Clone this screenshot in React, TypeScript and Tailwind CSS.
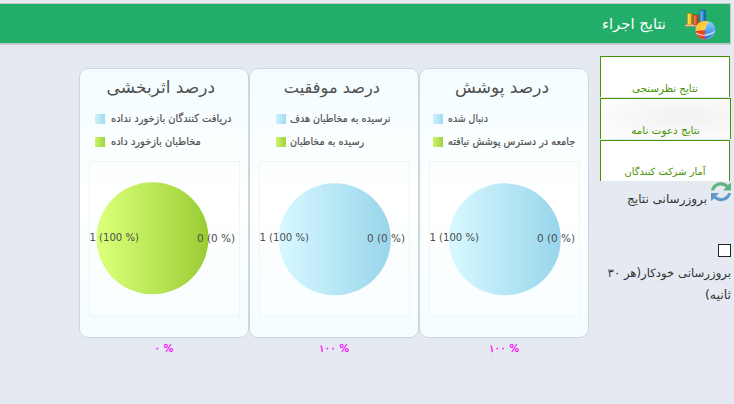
type Legend = { text: string; scale: string };

type Chart = {
  id: string;
  title: string;
  titleClass: string;
  legend: [Legend, Legend];
  legendClass: string;
  colors: [string, string];
  cx: number;
  cy: number;
  result: string;
};

const blue: [string, string] = ["#d5f7ff", "#98d5eb"];
const green: [string, string] = ["#d9ff78", "#99cc33"];

const charts: Chart[] = [
  {
    id: "coverage",
    title: "درصد پوشش",
    titleClass: "mr-[39px] pt-[5px] text-[17px]",
    legend: [
      { text: "دنبال شده", scale: "scale-x-[.85]" },
      { text: "جامعه در دسترس پوشش نیافته", scale: "scale-x-[.88]" },
    ],
    legendClass: "pl-[13px] gap-[5px]",
    colors: blue,
    cx: 75.8,
    cy: 78.3,
    result: "۱۰۰",
  },
  {
    id: "success",
    title: "درصد موفقیت",
    titleClass: "mr-[38px] pt-[6px] text-[16.2px]",
    legend: [
      { text: "نرسیده به مخاطبان هدف", scale: "scale-x-[.87]" },
      { text: "رسیده به مخاطبان", scale: "scale-x-[.87]" },
    ],
    legendClass: "pl-[26px] gap-[4px]",
    colors: blue,
    cx: 75.8,
    cy: 78.3,
    result: "۱۰۰",
  },
  {
    id: "effect",
    title: "درصد اثربخشی",
    titleClass: "mr-[33px] pt-[5px] text-[17px]",
    legend: [
      { text: "دریافت کنندگان بازخورد نداده", scale: "scale-x-[.895]" },
      { text: "مخاطبان بازخورد داده", scale: "scale-x-[.9]" },
    ],
    legendClass: "pl-[15px] gap-[6px]",
    colors: green,
    cx: 63.5,
    cy: 77.3,
    result: "۰",
  },
];

const swatches = [
  "bg-linear-to-r from-[#cdf3fd] to-[#a2dbee]",
  "bg-linear-to-r from-[#ccf36b] to-[#a1d33b]",
];

function Pie({ chart }: { chart: Chart }) {
  return (
    <svg width="151" height="156" className="block">
      <defs>
        <linearGradient id={chart.id}>
          <stop offset="0.05" stopColor={chart.colors[0]} />
          <stop offset="1" stopColor={chart.colors[1]} />
        </linearGradient>
      </defs>
      <rect x="0.5" y="0.5" width="150" height="155" fill="white" fillOpacity="0.3" stroke="#f1f4f5" />
      <circle cx={chart.cx} cy={chart.cy} r="56" fill={`url(#${chart.id})`} />
      <g fill="#4d4d4d" fontSize="11" fontFamily="'DejaVu Sans', sans-serif">
        <text x="0.5" y="80" textLength="49.5" lengthAdjust="spacingAndGlyphs">1 (100 %)</text>
        <text x="108" y="81" textLength="38" lengthAdjust="spacingAndGlyphs">0 (0 %)</text>
      </g>
    </svg>
  );
}

function ChartCard({ chart }: { chart: Chart }) {
  return (
    <div className="w-[170px]">
      <div className="h-[270px] rounded-[9px] border border-[#ccd9da] bg-linear-to-b from-[#f3fdff] via-[#ffffff] to-[#f3fdff] font-['DejaVu_Sans',sans-serif] text-[#505050]">
        <div className={`h-[42px] whitespace-nowrap leading-[26px] ${chart.titleClass}`}>
          {chart.title}
        </div>
        <div dir="ltr" className="h-[50px]">
          {chart.legend.map((item, i) => (
            <div key={item.text} className={`flex h-[23px] items-start pt-[3px] ${chart.legendClass}`}>
              <div className={`h-[10px] w-[10px] shrink-0 ${swatches[i]}`} />
              <div
                dir="rtl"
                className={`-mt-[2px] origin-left whitespace-nowrap text-[11px] leading-[14px] [-webkit-text-stroke:0.2px_#505050] ${item.scale}`}
              >
                {item.text}
              </div>
            </div>
          ))}
        </div>
        <div dir="ltr" className="pl-[9px]">
          <Pie chart={chart} />
        </div>
      </div>
      <div dir="ltr" className="h-[22px] text-center font-['DejaVu_Sans',sans-serif] text-[10.5px] leading-[21px] text-[#ff00ff] [-webkit-text-stroke:0.25px_#ff00ff]">
        {chart.result} %
      </div>
    </div>
  );
}

function ChartIcon() {
  return (
    <svg width="32" height="32" viewBox="0 0 32 32">
      <defs>
        <linearGradient id="barYellow">
          <stop stopColor="#fff06a" />
          <stop offset="1" stopColor="#f3a900" />
        </linearGradient>
        <linearGradient id="barRed">
          <stop stopColor="#ff9a62" />
          <stop offset="1" stopColor="#d92609" />
        </linearGradient>
        <linearGradient id="barBlue">
          <stop stopColor="#70c6ff" />
          <stop offset="1" stopColor="#1463c4" />
        </linearGradient>
        <linearGradient id="sliceYellow" y2="1">
          <stop stopColor="#ffb52a" />
          <stop offset="1" stopColor="#ffe24a" />
        </linearGradient>
        <linearGradient id="sliceBlue" x2="0" y2="1">
          <stop stopColor="#8bd3ff" />
          <stop offset="1" stopColor="#1878e0" />
        </linearGradient>
      </defs>
      <path d="M0 17.500l2-1.500h20v2.500H0z" fill="#f7e3d5" stroke="#9a5a34" strokeWidth=".5" />
      <path d="M2.300 5.300h4.500V17H2.300z" fill="url(#barYellow)" stroke="#b5740c" strokeWidth=".7" />
      <path d="M8.300 7h4.800v10H8.300z" fill="url(#barRed)" stroke="#a2290f" strokeWidth=".7" />
      <path d="M15 2.300h5.300V17H15z" fill="url(#barBlue)" stroke="#104b93" strokeWidth=".7" />
      <ellipse cx="20.300" cy="22.200" rx="10" ry="9.300" fill="#dcebf7" stroke="#5f7691" strokeWidth=".7" />
      <path d="M20 22L23 13.300C15 11.500 10 16 10.800 23z" fill="url(#sliceYellow)" />
      <path d="M20 22L10.800 23c.5 5 4.200 8 9.200 8.300z" fill="#ef3f13" />
      <path d="M20 22L23 13.300c5 1 7.500 4.500 7 9-1 5-4 8-10 9z" fill="url(#sliceBlue)" />
      <path d="M11.500 25c4 3.500 13 3 18-1.500" fill="none" stroke="white" strokeOpacity=".7" strokeWidth="1.300" />
    </svg>
  );
}

function RefreshIcon() {
  return (
    <svg width="20" height="20" viewBox="0 0 20 20" className="shrink-0">
      <path d="M0 8.500C.8 3.500 5 .3 10 .3c2.800 0 5 .9 6.900 2.600L20 .5v8h-8l2.900-2.900C11 1.800 5 3.200 2.800 8.500z" fill="#63b17c" />
      <path d="M20 11c-.8 5-5 8.200-10 8.200-2.800 0-5-.9-6.900-2.600L0 19v-8h8l-2.900 2.900C9 17.700 15 16.300 17.200 11z" fill="#6199c9" />
    </svg>
  );
}

const tabs = [
  { text: "نتایج نظرسنجی", className: "mr-px bg-white pb-px text-[10.3px]" },
  {
    text: "نتایج دعوت نامه",
    className: "bg-radial-[at_65%_45%] from-[#f1f1f1] via-[#f8f8f8] to-white pb-px text-[10.4px]",
  },
  { text: "آمار شرکت کنندگان", className: "mr-px bg-white pb-px text-[9.9px]" },
];

export default function App() {
  return (
    <div dir="rtl" className="h-[404px] w-[734px] overflow-hidden bg-[#e5eaf2] pt-[3px] pr-[3px] font-['DejaVu_Sans',sans-serif] text-[#333333]">
      <header className="flex h-[42px] items-center border-y border-r border-b-2 border-[#c5c9cb] bg-[#22ae68] pr-[13px] text-white">
        <ChartIcon />
        <h1 className="mr-[19px] whitespace-nowrap text-[14.8px] leading-[20px]">نتایج اجراء</h1>
      </header>
      <div className="flex pt-[11px]">
        <aside className="w-[131px] shrink-0">
          {tabs.map((tab) => (
            <div
              key={tab.text}
              className={`mb-px flex h-[41px] items-end justify-center whitespace-nowrap border border-b-0 border-[#469400] leading-[16px] text-[#469400] ${tab.className}`}
            >
              {tab.text}
            </div>
          ))}
          <div className="flex h-[62px] items-start gap-[4px]">
            <RefreshIcon />
            <span className="mt-[7px] whitespace-nowrap text-[12px] leading-[20px]">بروزرسانی نتایج</span>
          </div>
          <div className="h-[13px] w-[13px] border border-[#222222] bg-white" />
          <div className="mt-[6px] whitespace-nowrap text-[11.7px] leading-[21px]">
            بروزرسانی خودکار(هر ۳۰
            <br />
            <span className="text-[12.5px]">ثانیه)</span>
          </div>
        </aside>
        <main className="-mt-px flex h-[310px] flex-1 border-y border-[#e5e7e9] pt-[12px] pr-[11px]">
          {charts.map((chart) => (
            <ChartCard key={chart.id} chart={chart} />
          ))}
        </main>
      </div>
    </div>
  );
}
